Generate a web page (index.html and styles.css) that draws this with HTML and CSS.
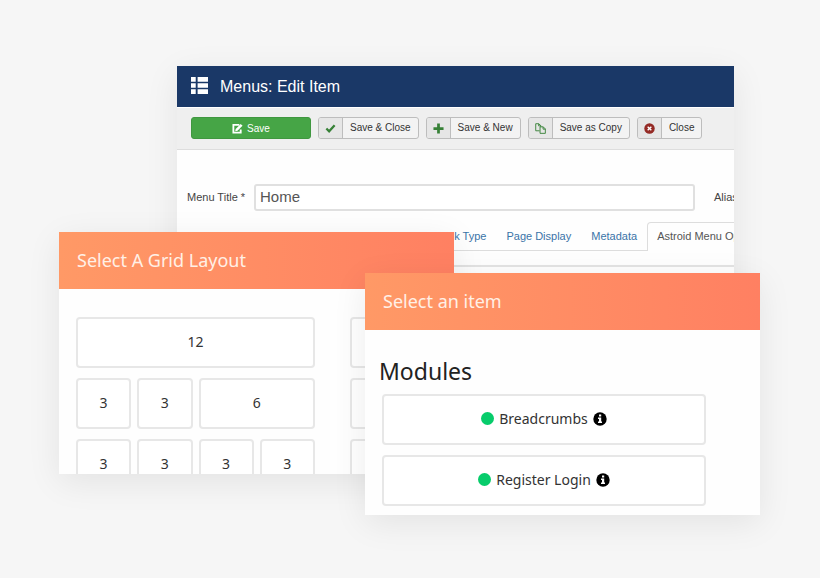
FILE: index.html
```html
<!DOCTYPE html>
<html lang="en">
<head>
<meta charset="utf-8">
<title>Menus: Edit Item</title>
<link rel="stylesheet" href="styles.css">
</head>
<body>
<main class="stage">
  <section class="window editor">
    <header class="editor-head">
      <svg class="list-icon" viewBox="0 0 18 18" aria-hidden="true"><path d="M0 0h5v5H0zM7 0h11v5H7zM0 6.500h5v5H0zM7 6.500h11v5H7zM0 13h5v5H0zM7 13h11v5H7z"/></svg>
      <h1>Menus: Edit Item</h1>
    </header>
    <div class="toolbar">
      <button class="btn primary" type="button"><svg viewBox="0 0 12 12" aria-hidden="true"><path d="M8 2H1.500v8.500h8V7" fill="none" stroke="currentColor" stroke-width="2"/><path d="M4 6.500 9.500 1 11.500 3 6 8.500 3.500 9z"/></svg>Save</button>
      <button class="btn" type="button"><span class="cell green"><svg viewBox="0 0 12 12" aria-hidden="true"><path d="M1.500 6 4.500 9 10.500 2.500" fill="none" stroke="currentColor" stroke-width="2.500"/></svg></span><span class="text">Save &amp; Close</span></button>
      <button class="btn" type="button"><span class="cell green"><svg viewBox="0 0 12 12" aria-hidden="true"><path d="M6 .5v11M.5 6h11" fill="none" stroke="currentColor" stroke-width="3"/></svg></span><span class="text">Save &amp; New</span></button>
      <button class="btn" type="button"><span class="cell green"><svg viewBox="0 0 12 12" aria-hidden="true"><path d="M5 8.500H.8V.8H4L6.500 3v1M4 .8V3.200h2.500M5.500 4.200H9L11.300 6.500v4.800H5.500zM8.800 4.200v2.500h2.500" fill="none" stroke="currentColor"/></svg></span><span class="text">Save as Copy</span></button>
      <button class="btn" type="button"><span class="cell red"><svg viewBox="0 0 12 12" aria-hidden="true"><circle cx="6" cy="6" r="5.700"/><path d="m4 4 4 4m0-4L4 8" stroke="#fff" stroke-width="1.500"/></svg></span><span class="text">Close</span></button>
    </div>
    <div class="fields">
      <label for="menu-title">Menu Title *</label>
      <input id="menu-title" type="text" value="Home">
      <label class="alias" for="alias">Alias</label>
      <input id="alias" type="text">
    </div>
    <nav class="tabs">
      <a href="#details">Details</a>
      <a href="#layout">Layout</a>
      <a href="#options">Options</a>
      <a href="#language">Language</a>
      <a href="#link">Link Type</a>
      <a href="#display">Page Display</a>
      <a href="#metadata">Metadata</a>
      <a class="active" href="#astroid">Astroid Menu Options</a>
    </nav>
    <div class="tab-panel"></div>
  </section>

  <section class="window layouts">
    <header class="panel-head"><h2>Select A Grid Layout</h2></header>
    <div class="groups">
      <div class="group">
        <button class="tile full" type="button">12</button>
        <button class="tile" type="button">3</button>
        <button class="tile" type="button">3</button>
        <button class="tile half" type="button">6</button>
        <button class="tile" type="button">3</button>
        <button class="tile" type="button">3</button>
        <button class="tile" type="button">3</button>
        <button class="tile" type="button">3</button>
      </div>
      <div class="group">
        <button class="tile full" type="button" aria-label="Layout 4"></button>
        <button class="tile full" type="button" aria-label="Layout 5"></button>
        <button class="tile full" type="button" aria-label="Layout 6"></button>
      </div>
    </div>
  </section>

  <section class="window items">
    <header class="panel-head"><h2>Select an item</h2></header>
    <div class="modules">
      <h3>Modules</h3>
      <div class="module-list">
        <button class="tile" type="button"><span class="dot"></span>Breadcrumbs<svg class="info" viewBox="0 0 14 14" aria-hidden="true"><circle cx="7" cy="7" r="6.700"/><path d="M6 2.500h2.200v2H6zM5 5.500h3.200v4H9V11H5V9.500h1V7H5z" fill="#fff"/></svg></button>
        <button class="tile" type="button"><span class="dot"></span>Register Login<svg class="info" viewBox="0 0 14 14" aria-hidden="true"><circle cx="7" cy="7" r="6.700"/><path d="M6 2.500h2.200v2H6zM5 5.500h3.200v4H9V11H5V9.500h1V7H5z" fill="#fff"/></svg></button>
      </div>
    </div>
  </section>
</main>
</body>
</html>
```
FILE: styles.css
```css
* { box-sizing: border-box; }
body { margin: 0; background: #f6f6f6; font-family: "Liberation Sans", Arial, sans-serif; }
h1, h2, h3 { margin: 0; font-weight: 400; }
button { font: inherit; cursor: pointer; }
svg { fill: currentColor; flex: none; }

.stage { position: relative; min-height: 100vh; overflow: hidden; }
.window { position: absolute; overflow: hidden; background: #fefefe; box-shadow: 0 8px 32px rgba(0, 0, 0, .08); }
.editor { top: 66px; left: 177px; right: 86px; }
.layouts { top: 232px; left: 59px; right: 366px; height: 242px; }
.items { top: 273px; left: 365px; right: 60px; }

.editor-head { display: flex; align-items: center; gap: 12px; padding: 0 14px; height: 41px; background: #1a3867; color: #fff; }
.editor-head h1 { font-size: 16px; }
.list-icon { width: 17px; height: 17px; margin-bottom: 3px; }

.toolbar { display: flex; gap: 7px; padding: 9px 14px 10px; border-top: 1px solid #fff; border-bottom: 1px solid #ddd; background: #efefef; }
.btn { display: flex; height: 22px; padding: 0; border: 1px solid #bdbdbd; border-radius: 3px; background: #f3f3f3; color: #333; font-size: 10px; white-space: nowrap; overflow: hidden; }
.btn svg { width: 11px; height: 11px; }
.btn .cell { display: grid; place-items: center; width: 24px; height: 20px; border-right: 1px solid #bdbdbd; background: #e6e6e6; }
.btn .text { padding: 0 7px; line-height: 20px; }
.btn.primary { width: 120px; align-items: center; justify-content: center; gap: 4px; border-color: #409740; background: #46a546; color: #fff; }
.green { color: #378137; }
.red { color: #942a25; }

.fields { display: flex; align-items: center; padding: 34px 10px 0; font-size: 11px; color: #444; white-space: nowrap; }
.fields label { flex: none; width: 67px; padding-bottom: 2px; }
.fields .alias { margin-left: 19px; }
.fields input { flex: none; width: 441px; height: 27px; padding: 0 4px 2px; border: 2px solid #e0e0e0; border-radius: 3px; background: #fff; color: #555; font-family: inherit; font-size: 15px; }

.tabs { display: flex; margin-top: 11px; padding-left: 19px; border-bottom: 1px solid #ddd; font-size: 11px; white-space: nowrap; }
.tabs a { flex: none; padding: 0 9px; border: 1px solid transparent; border-bottom: 0; line-height: 27px; color: #3a74a8; text-decoration: none; }
.tabs .active { margin-bottom: -1px; border-color: #ddd; border-radius: 4px 0 0; background: #fefefe; color: #555; }
.tab-panel { height: 50px; margin-top: 14px; border-top: 2px solid #e3e3e3; }

.layouts, .items { font-family: "Noto Sans", sans-serif; }
.panel-head { display: flex; align-items: center; height: 57px; padding: 0 18px 2px; background: linear-gradient(to right, #ff9966, #ff8062); color: #fff0e6; }
.panel-head h2 { font-size: 18px; line-height: 24px; }
.groups { display: flex; gap: 35px; padding: 28px 17px; }
.group { flex: none; display: grid; grid-template-columns: repeat(4, 1fr); gap: 10px 6px; width: 239px; }
.tile { display: flex; align-items: center; justify-content: center; gap: 5px; height: 51px; padding: 0 0 2px; border: 2px solid #e7e7e7; border-radius: 4px; background: #fff; color: #333; font-size: 14px; }
.full { grid-column: span 4; }
.half { grid-column: span 2; }

.modules { padding: 25px 14px 9px; color: #222; }
.modules h3 { font-size: 23px; line-height: 32px; }
.module-list { display: grid; gap: 10px; margin: 7px 40px 0 3px; }
.dot { width: 13px; height: 13px; border-radius: 50%; background: #07cc6b; }
.info { width: 14px; height: 14px; color: #000; }
```
